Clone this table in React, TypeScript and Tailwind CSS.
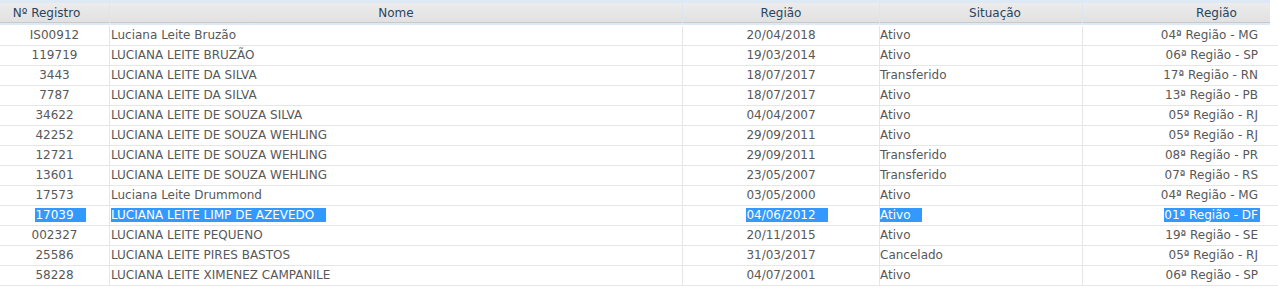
import React from "react"

type Row = {
    registro: string,
    nome: string,
    data: string,
    situacao: string,
    regiao: string,
    selected?: boolean
}

const rows: Row[] = [
    { registro: "IS00912", nome: "Luciana Leite Bruzão", data: "20/04/2018", situacao: "Ativo", regiao: "04ª Região - MG" },
    { registro: "119719", nome: "LUCIANA LEITE BRUZÃO", data: "19/03/2014", situacao: "Ativo", regiao: "06ª Região - SP" },
    { registro: "3443", nome: "LUCIANA LEITE DA SILVA", data: "18/07/2017", situacao: "Transferido", regiao: "17ª Região - RN" },
    { registro: "7787", nome: "LUCIANA LEITE DA SILVA", data: "18/07/2017", situacao: "Ativo", regiao: "13ª Região - PB" },
    { registro: "34622", nome: "LUCIANA LEITE DE SOUZA SILVA", data: "04/04/2007", situacao: "Ativo", regiao: "05ª Região - RJ" },
    { registro: "42252", nome: "LUCIANA LEITE DE SOUZA WEHLING", data: "29/09/2011", situacao: "Ativo", regiao: "05ª Região - RJ" },
    { registro: "12721", nome: "LUCIANA LEITE DE SOUZA WEHLING", data: "29/09/2011", situacao: "Transferido", regiao: "08ª Região - PR" },
    { registro: "13601", nome: "LUCIANA LEITE DE SOUZA WEHLING", data: "23/05/2007", situacao: "Transferido", regiao: "07ª Região - RS" },
    { registro: "17573", nome: "Luciana Leite Drummond", data: "03/05/2000", situacao: "Ativo", regiao: "04ª Região - MG" },
    { registro: "17039", nome: "LUCIANA LEITE LIMP DE AZEVEDO", data: "04/06/2012", situacao: "Ativo", regiao: "01ª Região - DF", selected: true },
    { registro: "002327", nome: "LUCIANA LEITE PEQUENO", data: "20/11/2015", situacao: "Ativo", regiao: "19ª Região - SE" },
    { registro: "25586", nome: "LUCIANA LEITE PIRES BASTOS", data: "31/03/2017", situacao: "Cancelado", regiao: "05ª Região - RJ" },
    { registro: "58228", nome: "LUCIANA LEITE XIMENEZ CAMPANILE", data: "04/07/2001", situacao: "Ativo", regiao: "06ª Região - SP" },
]

function Sel({ on, children, pad }: { on?: boolean, children: React.ReactNode, pad: string }) {
    if (!on) return <span>{children}</span>
    return <span className={`bg-[#3399ff] text-white ${pad}`}>{children}</span>
}

export default function App() {
    return (
        <div className="w-[1278px] h-[289px] bg-white overflow-hidden font-['DejaVu_Sans',Verdana,sans-serif]">
            {/* cabeçalho */}
            <div className="w-[1270px] border-t-[3px] border-[#dde9f5]">
                <div className="grid grid-cols-[110px_573px_197px_203px_1fr] h-[20px] bg-gradient-to-b from-[#ececec] to-[#e1e1e1] border-b border-[#c9c9c9] text-[12px] leading-[20px] text-[#2a4460]">
                    <div className="text-center pr-4 border-r border-[#dde6ee]">Nº Registro</div>
                    <div className="text-center border-r border-[#dde6ee]">Nome</div>
                    <div className="text-center border-r border-[#dde6ee]">Região</div>
                    <div className="text-center pl-7 border-r border-[#dde6ee]">Situação</div>
                    <div className="text-center pl-20">Região</div>
                </div>
                <div className="h-[2px] mb-[1px] bg-[#dde9f5]"></div>
            </div>

            {/* linhas */}
            <div className="w-[1278px]">
                {rows.map(r => (
                    <div key={r.registro} className="grid grid-cols-[110px_573px_197px_203px_1fr] h-[20px] border-b border-[#e6e6e6] text-[12px] leading-[19px] text-[#585858] whitespace-nowrap">
                        <div className="text-center border-r border-[#e6e6e6]">
                            <Sel on={r.selected} pad="pr-3 -mr-3">{r.registro}</Sel>
                        </div>
                        <div className="pl-[1px] border-r border-[#e6e6e6]">
                            <Sel on={r.selected} pad="pr-3">{r.nome}</Sel>
                        </div>
                        <div className="text-center border-r border-[#e6e6e6]">
                            <Sel on={r.selected} pad="pr-3 -mr-3">{r.data}</Sel>
                        </div>
                        <div className="border-r border-[#e6e6e6]">
                            <Sel on={r.selected} pad="pr-3">{r.situacao}</Sel>
                        </div>
                        <div className="text-right pr-[20px]">
                            <Sel on={r.selected} pad="pr-[2px] -mr-[2px]">{r.regiao}</Sel>
                        </div>
                    </div>
                ))}
            </div>
        </div>
    )
}
